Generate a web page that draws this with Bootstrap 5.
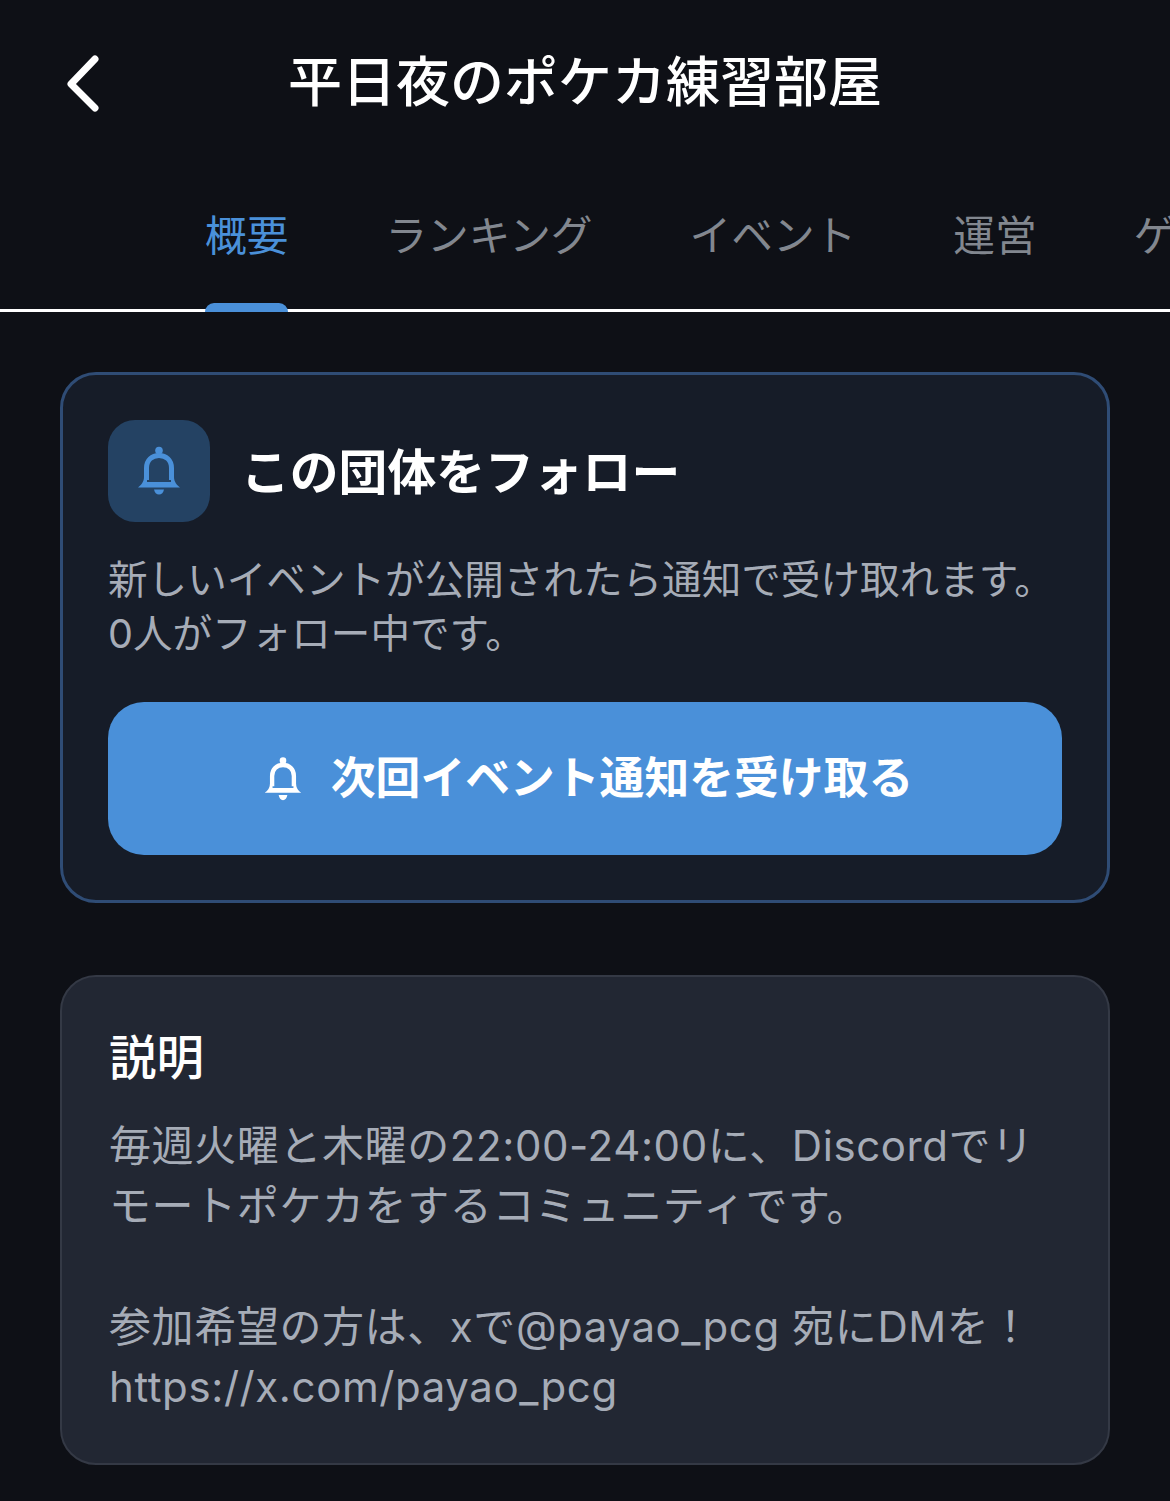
<!DOCTYPE html>
<html lang="ja">
<head>
<meta charset="utf-8">
<title>平日夜のポケカ練習部屋</title>
<link href="https://cdn.jsdelivr.net/npm/bootstrap@5.3.0/dist/css/bootstrap.min.css" rel="stylesheet">
<style>
html,body{background:#0e1016;height:1501px;overflow:hidden;}
body{font-family:"Inter","Noto Sans CJK JP",sans-serif;color:#fff;}
.topbar{height:165px;padding-left:62px;position:relative;}
.topbar svg{width:44px;height:66px;}
.page-title{position:absolute;left:0;right:0;top:50px;margin:0;text-align:center;font-size:54px;line-height:66px;font-weight:500;}
.tabbar{height:147px;box-shadow:inset 0 -3px 0 #fff;padding-left:205px;gap:97px;overflow:hidden;white-space:nowrap;}
.tab-item{position:relative;height:147px;font-size:41.7px;line-height:50px;padding-top:46px;color:#82878f;flex:none;}
.tab-item.on{color:#4a90d9;}
.tab-item.on::after{content:"";position:absolute;left:0;right:0;bottom:0;height:9px;background:#4a90d9;border-radius:9px 9px 0 0;}
.main-area{padding:60px 60px 0;}
.follow-box{height:531px;background:#161c28;border:3px solid #2f4c75;border-radius:36px;padding:45px;margin-bottom:72px;}
.bell-tile{width:102px;height:102px;border-radius:27px;background:#244263;}
.bell-tile svg{width:48px;height:54px;}
.follow-gap{gap:31px;}
.follow-head{font-size:48.8px;line-height:60px;font-weight:700;margin:4px 0 0;}
.follow-text{font-size:39.6px;line-height:54px;color:#a6acb7;margin:31px 0 41px;}
.cta-btn{height:153px;width:100%;border-radius:36px;background:#4a90d9;border:0;color:#fff;font-size:44.8px;font-weight:700;gap:27px;padding:0 0 0 5px;}
.cta-btn svg{width:42px;height:47px;}
.desc-box{height:490px;background:#222733;border:2px solid #343945;border-radius:36px;padding:48px 47px;}
.desc-head{font-size:47.5px;line-height:66px;font-weight:500;margin:0 0 25px;}
.desc-text{font-size:42px;line-height:60.3px;letter-spacing:.6px;color:#a6acb7;margin:0;white-space:pre-line;}
</style>
</head>
<body>
<header class="topbar d-flex align-items-center">
<svg viewBox="0 0 44 66" fill="none" stroke="#fff" stroke-width="7" stroke-linecap="round" stroke-linejoin="round"><path d="M33 9 L9 34 L33 58"/></svg>
<h1 class="page-title">平日夜のポケカ練習部屋</h1>
</header>
<nav class="tabbar d-flex">
<div class="tab-item on">概要</div>
<div class="tab-item">ランキング</div>
<div class="tab-item">イベント</div>
<div class="tab-item">運営</div>
<div class="tab-item">ゲスト</div>
</nav>
<main class="main-area">
<section class="follow-box">
<div class="d-flex align-items-center follow-gap">
<div class="bell-tile d-flex align-items-center justify-content-center">
<svg viewBox="0 0 48 54" fill="#4a90d9"><circle cx="24" cy="6.5" r="3.8"/><path d="M11.5 36V24C11.5 16 17 11.5 24 11.5S36.5 16 36.5 24V36" fill="none" stroke="#4a90d9" stroke-width="5"/><path d="M9 33C9 38 6 41 3 43.5H45C42 41 39 38 39 33H36V38H12V33Z"/><path d="M19 45.5h10c-.5 3-2.5 5-5 5s-4.5-2-5-5z"/></svg>
</div>
<h2 class="follow-head">この団体をフォロー</h2>
</div>
<p class="follow-text">新しいイベントが公開されたら通知で受け取れます。<br>0人がフォロー中です。</p>
<button class="cta-btn btn d-flex align-items-center justify-content-center">
<svg viewBox="0 0 48 54" fill="#fff"><circle cx="24" cy="6.5" r="3.8"/><path d="M11.5 36V24C11.5 16 17 11.5 24 11.5S36.5 16 36.5 24V36" fill="none" stroke="#fff" stroke-width="5"/><path d="M9 33C9 38 6 41 3 43.5H45C42 41 39 38 39 33H36V38H12V33Z"/><path d="M19 46h10c-.5 3.5-2.5 6-5 6s-4.5-2.500-5-6z"/></svg>
<span>次回イベント通知を受け取る</span>
</button>
</section>
<section class="desc-box">
<h2 class="desc-head">説明</h2>
<p class="desc-text">毎週火曜と木曜の22:00-24:00に、Discordでリ
モートポケカをするコミュニティです。

参加希望の方は、xで@payao_pcg 宛にDMを！
https://x.com/payao_pcg</p>
</section>
</main>
<script src="https://cdn.jsdelivr.net/npm/bootstrap@5.3.0/dist/js/bootstrap.bundle.min.js"></script>
</body>
</html>
